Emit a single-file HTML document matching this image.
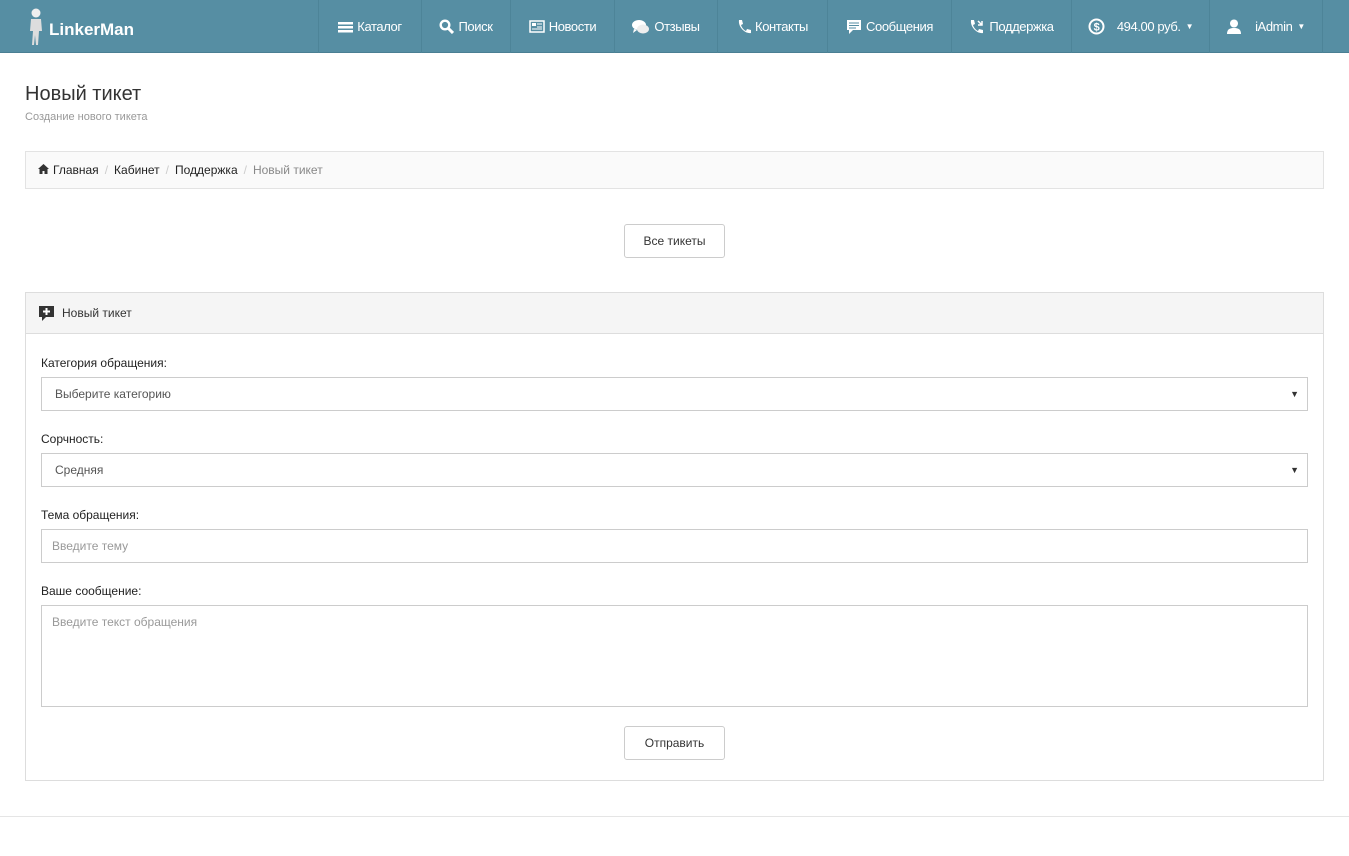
<!DOCTYPE html>
<html><head><meta charset="utf-8"><style>
*{box-sizing:border-box;margin:0;padding:0}
body{width:1349px;height:856px;background:#fff;font-family:"Liberation Sans",sans-serif;color:#333;font-size:13px;position:relative;overflow:hidden}
.nav{position:absolute;left:0;top:0;width:1349px;height:53px;background:#568ea3;border-bottom:1px solid #4a7f93}
.logo{position:absolute;left:27px;top:8px;color:#fff;font-weight:bold;font-size:17px;display:flex;align-items:center}
.logo span{margin-left:4px;margin-top:6px}
.item{position:absolute;top:0;height:53px;color:#fff;font-size:13px;letter-spacing:-0.4px;display:flex;align-items:center;justify-content:center;border-left:1px solid #4d8498}
.item svg{margin-right:4px}
.abs{position:absolute}
h1{position:absolute;left:25px;top:83px;font-size:20px;font-weight:normal;color:#333}
.sub{position:absolute;left:25px;top:111px;font-size:11px;color:#999}
.bc{position:absolute;left:25px;top:151px;width:1299px;height:38px;border:1px solid #e3e3e3;background:#fafafa;font-size:12px;padding:11px 12px;color:#222}
.bc .s{color:#ccc;margin:0 6px}
.btn{position:absolute;width:101px;height:34px;border:1px solid #ccc;border-radius:3px;background:#fff;font-size:12px;display:flex;align-items:center;justify-content:center;color:#333}
.panel{position:absolute;left:25px;top:292px;width:1299px;height:489px;border:1px solid #ddd}
.ph{height:41px;background:#f5f5f5;border-bottom:1px solid #ddd;display:flex;align-items:center;padding-left:12px;font-size:12px}
.lab{position:absolute;left:15px;font-size:12px;color:#222}
.in{position:absolute;left:15px;width:1267px;height:34px;border:1px solid #ccc;font-size:12px;padding:0 13px;display:flex;align-items:center;color:#555}
.arr{position:absolute;right:8px;font-size:9px;color:#333}
</style></head><body>
<div class="nav">
 <div class="logo"><svg width="18" height="38" viewBox="0 0 18 38"><circle cx="9" cy="5" r="4.5" fill="#eee"/><path d="M4 11h10l1 12h-3l-1 14h-2l-1-10-1 10H5L6 23H3z" fill="#ddd"/></svg><span>LinkerMan</span></div>
 <div class="item" style="left:318px;width:103px"><svg width="15" height="12"><rect y="1" width="15" height="2.5" fill="#fff"/><rect y="5" width="15" height="2.5" fill="#fff"/><rect y="9" width="15" height="2.5" fill="#fff"/></svg>Каталог</div>
 <div class="item" style="left:421px;width:89px"><svg width="15" height="15"><circle cx="6" cy="6" r="4.3" stroke="#fff" stroke-width="2.4" fill="none"/><path d="M9 9l5 5" stroke="#fff" stroke-width="3"/></svg>Поиск</div>
 <div class="item" style="left:510px;width:104px"><svg width="16" height="13"><rect x="1" y="1" width="14" height="11" stroke="#fff" stroke-width="1.5" fill="none"/><rect x="3" y="3" width="4" height="3" fill="#fff"/><path d="M8 4h5M8 7h5M3 9h10" stroke="#fff"/></svg>Новости</div>
 <div class="item" style="left:614px;width:103px"><svg width="18" height="16"><ellipse cx="7" cy="6" rx="7" ry="5" fill="#fff"/><path d="M2 10l-1 4 4-3z" fill="#fff"/><ellipse cx="11" cy="10" rx="6" ry="4.5" fill="#eee"/></svg>Отзывы</div>
 <div class="item" style="left:717px;width:110px"><svg width="14" height="15"><path d="M2 1l3 0 1 4-2 1c1 3 3 5 5 6l1-2 4 1v3c-6 1-13-6-12-13z" fill="#fff"/></svg>Контакты</div>
 <div class="item" style="left:827px;width:124px"><svg width="16" height="16"><path d="M1 1h14v10H7l-4 4v-4H1z" fill="#fff"/><path d="M3 4h10M3 6.5h10M3 9h7" stroke="#568ea3"/></svg>Сообщения</div>
 <div class="item" style="left:951px;width:120px"><svg width="16" height="15"><path d="M2 1l3 0 1 4-2 1c1 3 3 5 5 6l1-2 4 1v3c-6 1-13-6-12-13z" fill="#fff"/><path d="M9 2l4 4M13 2v4h-4" stroke="#fff" stroke-width="1.5" fill="none"/></svg>Поддержка</div>
 <div class="item" style="left:1071px;width:138px"><svg width="17" height="17" style="margin-right:12px"><circle cx="8.5" cy="8.5" r="7" stroke="#fff" stroke-width="2" fill="none"/><text x="8.5" y="12.5" font-size="11" fill="#fff" text-anchor="middle" font-weight="bold" font-family="Liberation Sans">$</text></svg>494.00 руб. <span style="font-size:8px;margin-left:5px">▼</span></div>
 <div class="item" style="left:1209px;width:114px;border-right:1px solid #4d8498"><svg width="14" height="15" style="margin-right:14px"><circle cx="7" cy="4.5" r="4" fill="#fff"/><path d="M0 15c0-5 3-6 7-6s7 1 7 6z" fill="#fff"/></svg>iAdmin <span style="font-size:8px;margin-left:5px">▼</span></div>
</div>
<h1>Новый тикет</h1>
<div class="sub">Создание нового тикета</div>
<div class="bc"><svg width="11" height="10" style="margin-right:4px"><path d="M5.5 0L0 5h1.5v5h3V7h2v3h3V5H11z" fill="#333"/></svg>Главная<span class="s">/</span>Кабинет<span class="s">/</span>Поддержка<span class="s">/</span><span style="color:#888">Новый тикет</span></div>
<div class="btn" style="left:624px;top:224px">Все тикеты</div>
<div class="panel">
 <div class="ph"><svg width="17" height="16" style="margin-right:7px"><path d="M1 1h15v11H8l-4 4v-4H1z" fill="#333"/><path d="M8.5 3v7M5 6.5h7" stroke="#fff" stroke-width="2"/></svg>Новый тикет</div>
 <div class="lab" style="top:63px">Категория обращения:</div>
 <div class="in" style="top:84px">Выберите категорию<span class="arr">▼</span></div>
 <div class="lab" style="top:139px">Сорчность:</div>
 <div class="in" style="top:160px">Средняя<span class="arr">▼</span></div>
 <div class="lab" style="top:215px">Тема обращения:</div>
 <div class="in" style="top:236px;color:#999;padding-left:10px">Введите тему</div>
 <div class="lab" style="top:291px">Ваше сообщение:</div>
 <div class="in" style="top:312px;height:102px;align-items:flex-start;padding:9px 10px;color:#999">Введите текст обращения</div>
 <div class="btn" style="left:598px;top:433px">Отправить</div>
</div>
<div class="abs" style="left:0;top:816px;width:1349px;height:1px;background:#e5e5e5"></div>
</body></html>
